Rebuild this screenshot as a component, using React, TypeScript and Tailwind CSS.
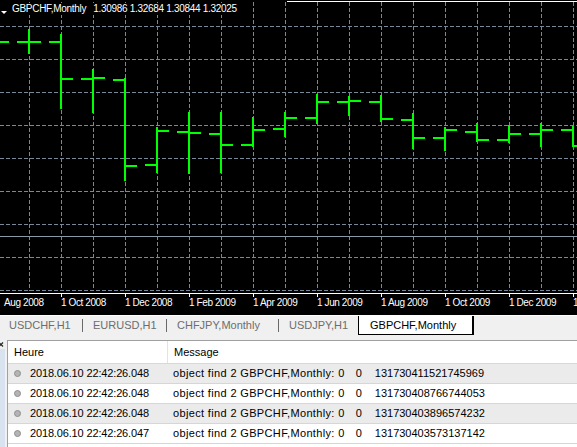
import React from "react";

type Bar = { x: number; o: number; h: number; l: number; c: number };

const bars: Bar[] = [
  { x: -3, o: 42, h: 35, l: 50, c: 42 },
  { x: 29, o: 42, h: 29, l: 54, c: 42 },
  { x: 61, o: 42, h: 34, l: 109, c: 79 },
  { x: 93, o: 79, h: 69, l: 113, c: 78 },
  { x: 125, o: 80, h: 78, l: 181, c: 166 },
  { x: 157, o: 165, h: 127, l: 173, c: 131 },
  { x: 189, o: 132, h: 112, l: 174, c: 133 },
  { x: 221, o: 134, h: 112, l: 173, c: 145 },
  { x: 253, o: 145, h: 117, l: 147, c: 130 },
  { x: 285, o: 129, h: 112, l: 137, c: 118 },
  { x: 317, o: 118, h: 94, l: 124, c: 102 },
  { x: 349, o: 102, h: 96, l: 116, c: 101 },
  { x: 381, o: 102, h: 95, l: 122, c: 119 },
  { x: 413, o: 120, h: 113, l: 149, c: 138 },
  { x: 445, o: 138, h: 127, l: 151, c: 130 },
  { x: 477, o: 132, h: 123, l: 142, c: 140 },
  { x: 509, o: 140, h: 125, l: 143, c: 134 },
  { x: 541, o: 134, h: 123, l: 147, c: 130 },
  { x: 573, o: 130, h: 126, l: 147, c: 146 },
];

const gridX = Array.from({ length: 18 }, (_, i) => 29 + i * 32);
const gridY = [26, 59, 92, 125, 158, 191, 224, 257, 290];
const ticks = Array.from({ length: 9 }, (_, i) => 61 + i * 64);

const axisLabels = [
  "1 Oct 2008",
  "1 Dec 2008",
  "1 Feb 2009",
  "1 Apr 2009",
  "1 Jun 2009",
  "1 Aug 2009",
  "1 Oct 2009",
  "1 Dec 2009",
  "1 Feb 2010",
];

const rows = [
  { time: "2018.06.10 22:42:26.048", id: "131730411521745969" },
  { time: "2018.06.10 22:42:26.048", id: "131730408766744053" },
  { time: "2018.06.10 22:42:26.048", id: "131730403896574232" },
  { time: "2018.06.10 22:42:26.047", id: "131730403573137142" },
];

function Chart() {
  return (
    <div className="relative h-[315px] overflow-hidden bg-black">
      <svg
        className="absolute inset-0"
        width={577}
        height={315}
        shapeRendering="crispEdges"
      >
        <line x1={287} y1={1.5} x2={577} y2={1.5} stroke="#ffffff" />
        {gridX.map((x) => (
          <line
            key={"v" + x}
            x1={x + 0.5}
            y1={2}
            x2={x + 0.5}
            y2={291}
            stroke="#778899"
            strokeDasharray="4 2"
          />
        ))}
        {gridY.map((y) => (
          <line
            key={"h" + y}
            x1={0}
            y1={y + 0.5}
            x2={577}
            y2={y + 0.5}
            stroke="#778899"
            strokeDasharray="4 2"
          />
        ))}
        <line x1={0} y1={236.5} x2={577} y2={236.5} stroke="#8a99a8" />
        <line x1={0} y1={293.5} x2={577} y2={293.5} stroke="#ffffff" />
        {ticks.map((x) => (
          <line key={"t" + x} x1={x + 0.5} y1={293} x2={x + 0.5} y2={297} stroke="#ffffff" />
        ))}
        {bars.map((b) => (
          <g key={b.x} fill="#00ff00">
            <rect x={b.x - 1} y={b.h} width={2} height={b.l - b.h} />
            <rect x={b.x - 12} y={b.o - 1} width={12} height={2} />
            <rect x={b.x} y={b.c - 1} width={12} height={2} />
          </g>
        ))}
      </svg>

      <div className="absolute left-0 top-[3px] flex items-center bg-black pr-[4px] font-['Liberation_Sans',Arial,sans-serif] text-[10px] leading-[12px] tracking-[-0.3px] text-white">
        <svg width={12} height={12} className="shrink-0">
          <polygon points="1,8 7,8 4,11" fill="#ffffff" />
        </svg>
        <span>GBPCHF,Monthly</span>
        <span className="ml-[7px]">1.30986 1.32684 1.30844 1.32025</span>
      </div>

      <div className="absolute left-0 top-[297px] flex font-['Liberation_Sans',Arial,sans-serif] text-[10px] leading-[12px] tracking-[-0.4px] text-white">
        <div className="w-[61px] shrink-0 pl-[4px]">Aug 2008</div>
        {axisLabels.map((l) => (
          <div key={l} className="w-[64px] shrink-0 whitespace-nowrap">
            {l}
          </div>
        ))}
      </div>
    </div>
  );
}

function Tabs() {
  const sep = <div className="h-[13px] w-px shrink-0 bg-[#6a6a6a]" />;
  return (
    <div className="flex h-[19px] items-center text-[11px] leading-[19px] text-[#6d6d6d]">
      <div className="w-[82px] shrink-0 pl-[9px]">USDCHF,H1</div>
      {sep}
      <div className="w-[83px] shrink-0 pl-[10px]">EURUSD,H1</div>
      {sep}
      <div className="w-[111px] shrink-0 pl-[10px]">CHFJPY,Monthly</div>
      {sep}
      <div className="w-[79px] shrink-0 pl-[10px]">USDJPY,H1</div>
      <div className="h-[19px] w-[116px] shrink-0 border-b border-l border-r-2 border-black bg-white pl-[11px] leading-[18px] text-black">
        GBPCHF,Monthly
      </div>
    </div>
  );
}

function Journal() {
  return (
    <div className="mt-[5px] flex h-[107px]">
      <div className="flex w-[5px] shrink-0 flex-col">
        <svg width={5} height={9} className="shrink-0">
          <path d="M-1 2.5 L3 6.5 M3 2.5 L-1 6.5" stroke="#202020" strokeWidth={1.2} />
        </svg>
        <div className="flex-1 bg-[#d8e3ef]" />
      </div>
      <div className="ml-[2px] flex-1 overflow-hidden border-l border-t border-[#a0a0a0] bg-white text-black">
        <div className="flex h-[23px] items-center border-b border-[#d8d8d8] text-[11px]">
          <div className="w-[159px] shrink-0 pl-[6px]">Heure</div>
          <div className="h-full w-px shrink-0 bg-[#e3e3e3]" />
          <div className="pl-[6px]">Message</div>
        </div>
        {rows.map((r, i) => (
          <div
            key={r.id}
            className={
              "flex h-[20px] items-center border-b border-[#d6d6d6] text-[11px] " +
              (i % 2 === 0 ? "bg-[#ebebeb]" : "bg-white")
            }
          >
            <div className="flex w-[160px] shrink-0 items-center pl-[6px]">
              <span className="h-[7px] w-[7px] shrink-0 rounded-full border border-[#8e8e8e] bg-[#b4b4b4]" />
              <span className="ml-[9px] tracking-[-0.15px]">{r.time}</span>
            </div>
            <div className="flex items-center whitespace-nowrap pl-[5px]">
              <span className="tracking-[0.35px]">object find 2 GBPCHF,Monthly: 0</span>
              <span className="ml-[11px]">0</span>
              <span className="ml-[13px]">{r.id}</span>
            </div>
          </div>
        ))}
      </div>
    </div>
  );
}

export default function App() {
  return (
    <div className="h-[447px] w-[577px] overflow-hidden bg-[#f0f0f0] font-['Liberation_Sans',Arial,sans-serif]">
      <div className="border-b border-white">
        <Chart />
      </div>
      <Tabs />
      <Journal />
    </div>
  );
}
